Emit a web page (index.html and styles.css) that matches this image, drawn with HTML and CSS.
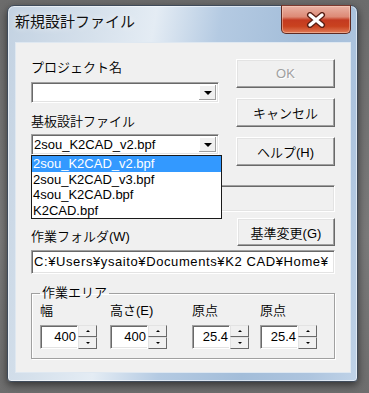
FILE: index.html
```html
<!DOCTYPE html>
<html lang="ja">
<head>
<meta charset="utf-8">
<title>新規設計ファイル</title>
<link rel="stylesheet" href="styles.css">
</head>
<body>
<div class="desk">
  <div class="win">
    <div class="titlebar">
      <span class="title">新規設計ファイル</span>
      <div class="close">
        <svg width="22" height="16" viewBox="0 0 22 16">
          <path d="M5 3 L17 13 M17 3 L5 13" stroke="#5a1f14" stroke-width="6" stroke-linecap="round" fill="none"/>
          <path d="M5 3 L17 13 M17 3 L5 13" stroke="#ffffff" stroke-width="3.4" stroke-linecap="round" fill="none"/>
        </svg>
      </div>
    </div>
    <div class="client">
      <div class="top">
        <div class="left">
          <div class="label">プロジェクト名</div>
          <div class="combo"><span class="val"></span><span class="arrow"></span></div>
          <div class="label l2">基板設計ファイル</div>
          <div class="combo c2"><span class="val">2sou_K2CAD_v2.bpf</span><span class="arrow"></span></div>
          <ul class="droplist">
            <li class="sel">2sou_K2CAD_v2.bpf</li>
            <li>2sou_K2CAD_v3.bpf</li>
            <li>4sou_K2CAD.bpf</li>
            <li>K2CAD.bpf</li>
          </ul>
        </div>
        <div class="btns">
          <div class="btn disabled">OK</div>
          <div class="btn">キャンセル</div>
          <div class="btn">ヘルプ(H)</div>
        </div>
      </div>
      <div class="edit hidden-edit"></div>
      <div class="row">
        <div class="label">作業フォルダ(W)</div>
        <div class="btn wide">基準変更(G)</div>
      </div>
      <div class="edit path">C:¥Users¥ysaito¥Documents¥K2 CAD¥Home¥</div>
      <fieldset class="group">
        <legend>作業エリア</legend>
        <div class="grid">
          <div class="cell">
            <div class="clabel">幅</div>
            <div class="spin"><div class="f">400</div><div class="ud"><span class="up"></span><span class="dn"></span></div></div>
          </div>
          <div class="cell">
            <div class="clabel">高さ(E)</div>
            <div class="spin"><div class="f">400</div><div class="ud"><span class="up"></span><span class="dn"></span></div></div>
          </div>
          <div class="cell">
            <div class="clabel">原点</div>
            <div class="spin"><div class="f">25.4</div><div class="ud"><span class="up"></span><span class="dn"></span></div></div>
          </div>
          <div class="cell">
            <div class="clabel">原点</div>
            <div class="spin"><div class="f">25.4</div><div class="ud"><span class="up"></span><span class="dn"></span></div></div>
          </div>
        </div>
      </fieldset>
    </div>
  </div>
</div>
</body>
</html>
```

FILE: styles.css
```css
* { box-sizing: border-box; }
html, body { margin: 0; padding: 0; }
body {
  width: 369px;
  height: 393px;
  overflow: hidden;
  background: linear-gradient(180deg, #6c6c6c 0%, #7a7a7a 60%, #6e6e6e 100%);
  font-family: "Liberation Sans", "Noto Sans CJK JP", sans-serif;
  font-size: 13px;
  font-weight: 350;
  color: #000;
}
.desk { padding: 5px 0 0 7px; }
.win {
  width: 351px;
  height: 377px;
  border: 1px solid #3f4b5a;
  border-radius: 7px 7px 4px 4px;
  background: linear-gradient(100deg, #c3d2e2 0%, #d6e1ec 22%, #e4ecf4 36%, #b4cae2 52%, #a3bdd9 72%, #adc4de 88%, #c0d3e8 100%);
  padding: 0 6px 8px 7px;
  display: flex;
  flex-direction: column;
  box-shadow: 0 3px 9px rgba(0,0,0,.55), inset 0 0 0 1px rgba(255,255,255,.55);
}
.titlebar {
  height: 36px;
  flex: none;
  display: flex;
  justify-content: space-between;
  align-items: flex-start;
}
.title {
  font-family: "Noto Sans CJK JP", sans-serif;
  font-size: 15px;
  font-weight: 400;
  line-height: 18px;
  padding-top: 6px;
  color: #111;
  text-shadow: 0 0 6px rgba(255,255,255,.9);
}
.close {
  width: 70px;
  height: 29px;
  margin-top: -1px;
  border: 1px solid #5e2a22;
  border-top-color: #7a3a30;
  border-radius: 0 0 5px 5px;
  background: linear-gradient(180deg, #e9b2a4 0%, #dd8a76 40%, #c43a20 52%, #c9421f 75%, #e07a56 100%);
  box-shadow: inset 0 0 0 1px rgba(255,220,200,.45);
  display: flex;
  align-items: center;
  justify-content: center;
}
.client {
  flex: 1;
  background: #f0f0f0;
  border: 1px solid #dfe8f1;
  padding: 16px 15px 0 15px;
}
.top { display: flex; justify-content: space-between; }
.left { width: 188px; position: relative; }
.label { line-height: 18px; height: 18px; white-space: nowrap; }
.l2 { margin-top: 10px; }
.combo {
  margin-top: 5px;
  height: 21px;
  display: flex;
  background: #fff;
  border: 1px solid;
  border-color: #a0a0a0 #fff #fff #a0a0a0;
  box-shadow: inset 1px 1px 0 #696969, inset -1px -1px 0 #e3e3e3;
  padding: 2px 2px 2px 2px;
}
.combo.c2 { margin-top: 3px; }
.combo .val { flex: 1; line-height: 15px; white-space: nowrap; }
.arrow {
  width: 17px;
  background: #f0f0f0;
  box-shadow: inset -1px -1px 0 #a0a0a0, inset 1px 1px 0 #fff;
  display: flex;
  align-items: center;
  justify-content: center;
}
.arrow::after {
  content: "";
  border-left: 4px solid transparent;
  border-right: 4px solid transparent;
  border-top: 4px solid #000;
  margin-top: 1px;
}
.droplist {
  position: absolute;
  top: 96px;
  left: 0;
  width: 191px;
  margin: 0;
  padding: 0;
  list-style: none;
  background: #fff;
  border: 1px solid #1a1a1a;
  z-index: 2;
}
.droplist li {
  line-height: 15.5px;
  height: 15.5px;
  padding-left: 1px;
  white-space: nowrap;
}
.droplist li.sel { background: #3399ff; color: #fff; }
.btns { width: 99px; display: flex; flex-direction: column; gap: 10px; }
.btn {
  height: 29px;
  background: #f0f0f0;
  border: 1px solid;
  border-color: #fff #696969 #696969 #fff;
  box-shadow: inset -1px -1px 0 #a0a0a0, inset 1px 1px 0 #e3e3e3;
  display: flex;
  align-items: center;
  justify-content: center;
  white-space: nowrap;
}
.btn.disabled { color: #a0a0a0; text-shadow: 1px 1px 0 #fff; }
.edit {
  border: 1px solid;
  border-color: #a0a0a0 #fff #fff #a0a0a0;
  box-shadow: inset 1px 1px 0 #696969, inset -1px -1px 0 #e3e3e3;
}
.hidden-edit { margin-top: 19px; height: 27px; background: #f0f0f0; }
.row {
  margin-top: 6px;
  display: flex;
  justify-content: space-between;
  align-items: flex-end;
}
.btn.wide { width: 98px; height: 28px; }
.path {
  margin-top: 4px;
  height: 24px;
  background: #fff;
  line-height: 22px;
  padding-left: 2px;
  letter-spacing: 0.6px;
  white-space: nowrap;
  overflow: hidden;
}
.group {
  margin: 11px 0 0;
  padding: 1px 8px 9px;
  border: 1px solid #a0a0a0;
  box-shadow: inset 1px 1px 0 #fff, 1px 1px 0 #fff;
  min-width: 0;
}
.group legend { padding: 0 2px; line-height: 16px; }
.grid { display: grid; grid-template-columns: 70px 82px 68px 58px; }
.clabel { line-height: 17px; white-space: nowrap; }
.spin { display: flex; width: 57px; height: 24px; margin-top: 6px; }
.spin .f {
  width: 38px;
  background: #fff;
  border: 1px solid;
  border-color: #a0a0a0 transparent #fff #a0a0a0;
  box-shadow: inset 1px 1px 0 #696969, inset 0 -1px 0 #e3e3e3;
  text-align: right;
  line-height: 21px;
  padding-right: 1px;
}
.spin .ud { width: 19px; display: flex; flex-direction: column; }
.ud span {
  flex: 1;
  background: #f0f0f0;
  border: 1px solid;
  border-color: #e3e3e3 #696969 #696969 #e3e3e3;
  display: flex;
  align-items: center;
  justify-content: center;
}
.ud .up::after {
  content: "";
  border-left: 2px solid transparent;
  border-right: 2px solid transparent;
  border-bottom: 2px solid #000;
}
.ud .dn::after {
  content: "";
  border-left: 2px solid transparent;
  border-right: 2px solid transparent;
  border-top: 2px solid #000;
}
```
